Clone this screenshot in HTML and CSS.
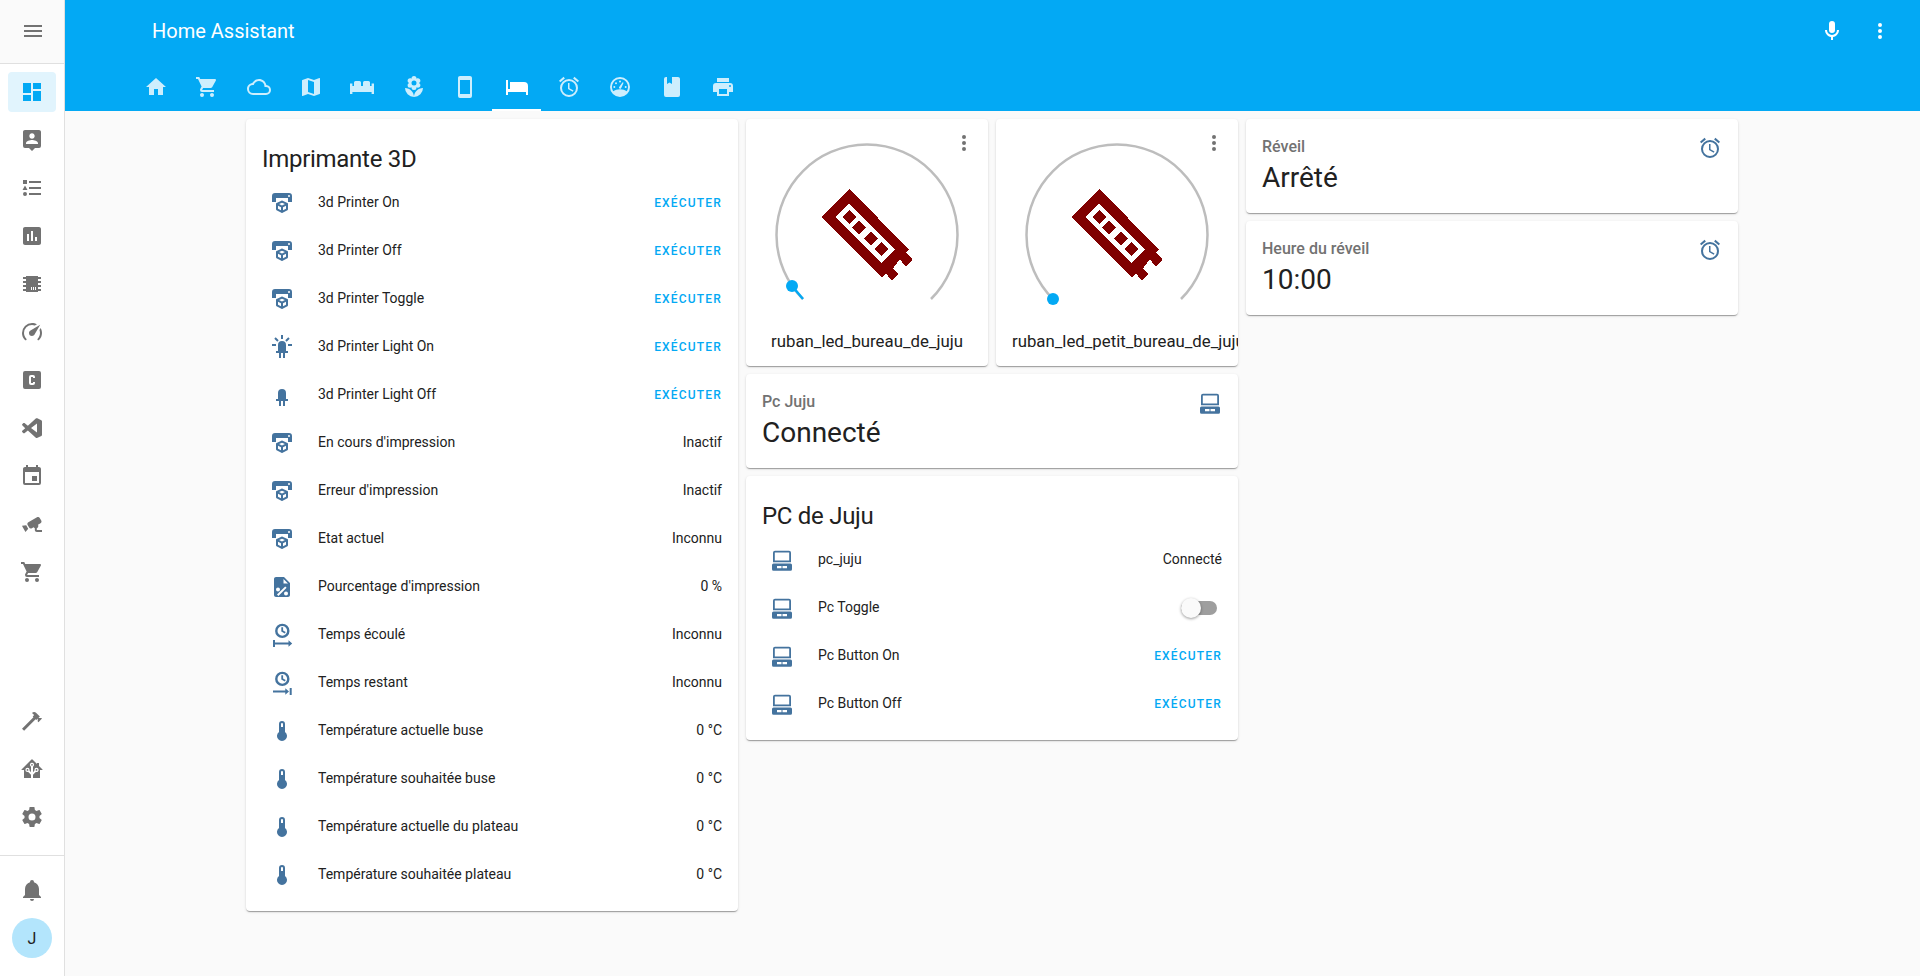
FILE: index.html
```html
<!DOCTYPE html>
<html lang="fr">
<head>
<meta charset="utf-8">
<title>Home Assistant</title>
<link rel="stylesheet" href="styles.css">
</head>
<body>
<svg class="sprite" xmlns="http://www.w3.org/2000/svg">
  <symbol id="menu" viewBox="0 0 24 24"><path d="M3,6H21V8H3V6M3,11H21V13H3V11M3,16H21V18H3V16Z"/></symbol>
  <symbol id="home" viewBox="0 0 24 24"><path d="M10,20V14H14V20H19V12H22L12,3L2,12H5V20H10Z"/></symbol>
  <symbol id="cart" viewBox="0 0 24 24"><path d="M17,18C15.89,18 15,18.89 15,20A2,2 0 0,0 17,22A2,2 0 0,0 19,20C19,18.89 18.1,18 17,18M1,2V4H3L6.6,11.59L5.24,14.04C5.09,14.32 5,14.65 5,15A2,2 0 0,0 7,17H19V15H7.42A0.25,0.25 0 0,1 7.17,14.75C7.17,14.7 7.18,14.66 7.2,14.63L8.1,13H15.55C16.3,13 16.96,12.58 17.3,11.97L20.88,5.5C20.95,5.34 21,5.17 21,5A1,1 0 0,0 20,4H5.21L4.27,2M7,18C5.89,18 5,18.89 5,20A2,2 0 0,0 7,22A2,2 0 0,0 9,20C9,18.89 8.1,18 7,18Z"/></symbol>
  <symbol id="cloud" viewBox="0 0 24 24"><path d="M19,18H6A4,4 0 0,1 2,14A4,4 0 0,1 6,10H6.71C7.37,7.69 9.5,6 12,6A5.5,5.5 0 0,1 17.5,11.5V12H19A3,3 0 0,1 22,15A3,3 0 0,1 19,18M19.35,10.03C18.67,6.59 15.64,4 12,4C9.11,4 6.6,5.64 5.35,8.03C2.34,8.36 0,10.9 0,14A6,6 0 0,0 6,20H19A5,5 0 0,0 24,15C24,12.36 21.95,10.22 19.35,10.03Z"/></symbol>
  <symbol id="map" viewBox="0 0 24 24"><path d="M15,19L9,16.89V5L15,7.11M20.5,3C20.44,3 20.39,3 20.34,3L15,5.1L9,3L3.36,4.9C3.15,4.97 3,5.15 3,5.38V20.5A0.5,0.5 0 0,0 3.5,21C3.55,21 3.61,21 3.66,20.97L9,18.9L15,21L20.64,19.1C20.85,19 21,18.85 21,18.62V3.5A0.5,0.5 0 0,0 20.5,3Z"/></symbol>
  <symbol id="sofa" viewBox="0 0 24 24"><path d="M0 8.5H2.4V11H4V7.5A1.5 1.5 0 0 1 5.5 6H9.5A1.5 1.5 0 0 1 11 7.5V11H13V7.5A1.5 1.5 0 0 1 14.5 6H18.5A1.5 1.5 0 0 1 20 7.5V11H21.6V8.5H24V19H21.6V17H2.4V19H0Z"/></symbol>
  <symbol id="flower" viewBox="0 0 24 24"><path fill-rule="evenodd" d="M3,13A9,9 0 0,0 12,22C12,17 7.97,13 3,13M12,5.5A2.5,2.5 0 0,1 14.5,8A2.5,2.5 0 0,1 12,10.5A2.5,2.5 0 0,1 9.5,8A2.5,2.5 0 0,1 12,5.5M5.6,10.25A2.5,2.5 0 0,0 8.1,12.75C8.63,12.75 9.12,12.58 9.5,12.31C9.5,12.37 9.5,12.43 9.5,12.5A2.5,2.5 0 0,0 12,15A2.5,2.5 0 0,0 14.5,12.5C14.5,12.43 14.5,12.37 14.5,12.31C14.88,12.58 15.37,12.75 15.9,12.75C17.28,12.75 18.4,11.63 18.4,10.25C18.4,9.25 17.81,8.4 16.97,8C17.81,7.6 18.4,6.74 18.4,5.75C18.4,4.37 17.28,3.25 15.9,3.25C15.37,3.25 14.88,3.41 14.5,3.69C14.5,3.63 14.5,3.56 14.5,3.5A2.5,2.5 0 0,0 12,1A2.5,2.5 0 0,0 9.5,3.5C9.5,3.56 9.5,3.63 9.5,3.69C9.12,3.41 8.63,3.25 8.1,3.25A2.5,2.5 0 0,0 5.6,5.75C5.6,6.74 6.19,7.6 7.03,8C6.19,8.4 5.6,9.25 5.6,10.25M12,22A9,9 0 0,0 21,13C16,13 12,17 12,22Z"/></symbol>
  <symbol id="phone" viewBox="0 0 24 24"><path d="M17,19H7V5H17M17,1H7C5.89,1 5,1.89 5,3V21A2,2 0 0,0 7,23H17A2,2 0 0,0 19,21V3C19,1.89 18.1,1 17,1Z"/></symbol>
  <symbol id="bed" viewBox="0 0 24 24"><path d="M19,7H5V14H3V5H1V20H3V17H21V20H23V11A4,4 0 0,0 19,7Z"/></symbol>
  <symbol id="alarm" viewBox="0 0 24 24"><path d="M12,20A7,7 0 0,1 5,13A7,7 0 0,1 12,6A7,7 0 0,1 19,13A7,7 0 0,1 12,20M12,4A9,9 0 0,0 3,13A9,9 0 0,0 12,22A9,9 0 0,0 21,13A9,9 0 0,0 12,4M12.5,8H11V14L15.75,16.85L16.5,15.62L12.5,13.25V8M7.88,3.39L6.6,1.86L2,5.71L3.29,7.24L7.88,3.39M22,5.72L17.4,1.86L16.11,3.39L20.71,7.25L22,5.72Z"/></symbol>
  <symbol id="dial" viewBox="0 0 24 24"><path fill-rule="evenodd" d="M12 2A10 10 0 1 1 12 22A10 10 0 1 1 12 2M12 4A8 8 0 0 0 5.2 16.2C6.9 14.9 9.3 14.2 12 14.2C14.7 14.2 17.1 14.9 18.8 16.2A8 8 0 0 0 12 4Z"/><path d="M11 12.2L14.6 7.2L15.6 7.8L13 13.4A1.2 1.2 0 0 1 11 12.2Z"/><circle cx="12" cy="6.6" r="1"/><circle cx="8" cy="8.3" r="1"/><circle cx="6.3" cy="12" r="1"/><circle cx="17.7" cy="12" r="1"/></symbol>
  <symbol id="book" viewBox="0 0 24 24"><path d="M18,22A2,2 0 0,0 20,20V4C20,2.89 19.1,2 18,2H12V9L9.5,7.5L7,9V2H6A2,2 0 0,0 4,4V20A2,2 0 0,0 6,22H18Z"/></symbol>
  <symbol id="printer" viewBox="0 0 24 24"><path d="M18,3H6V7H18M19,12A1,1 0 0,1 18,11A1,1 0 0,1 19,10A1,1 0 0,1 20,11A1,1 0 0,1 19,12M16,19H8V14H16M19,8H5A3,3 0 0,0 2,11V17H6V21H18V17H22V11A3,3 0 0,0 19,8Z"/></symbol>
  <symbol id="mic" viewBox="0 0 24 24"><path d="M12,2A3,3 0 0,1 15,5V11A3,3 0 0,1 12,14A3,3 0 0,1 9,11V5A3,3 0 0,1 12,2M19,11C19,14.53 16.39,17.44 13,17.93V21H11V17.93C7.61,17.44 5,14.53 5,11H7A5,5 0 0,0 12,16A5,5 0 0,0 17,11H19Z"/></symbol>
  <symbol id="dots" viewBox="0 0 24 24"><path d="M12,16A2,2 0 0,1 14,18A2,2 0 0,1 12,20A2,2 0 0,1 10,18A2,2 0 0,1 12,16M12,10A2,2 0 0,1 14,12A2,2 0 0,1 12,14A2,2 0 0,1 10,12A2,2 0 0,1 12,10M12,4A2,2 0 0,1 14,6A2,2 0 0,1 12,8A2,2 0 0,1 10,6A2,2 0 0,1 12,4Z"/></symbol>
  <symbol id="dashboard" viewBox="0 0 24 24"><path d="M13,3V9H21V3M13,21H21V11H13M3,21H11V15H3M3,13H11V3H3V13Z"/></symbol>
  <symbol id="account-pin" viewBox="0 0 24 24"><path fill-rule="evenodd" d="M18,16H6V15.1C6,13.1 10,12 12,12C14,12 18,13.1 18,15.1ZM12,5.3C13.5,5.3 14.7,6.5 14.7,8C14.7,9.5 13.5,10.7 12,10.7C10.5,10.7 9.3,9.5 9.3,8C9.3,6.5 10.5,5.3 12,5.3ZM19,2H5C3.89,2 3,2.89 3,4V18A2,2 0 0,0 5,20H9L12,23L15,20H19A2,2 0 0,0 21,18V4C21,2.89 20.1,2 19,2Z"/></symbol>
  <symbol id="list" viewBox="0 0 24 24"><path d="M5,9.5L7.5,14H2.5L5,9.5M3,4H7V8H3V4M5,20A2,2 0 0,0 7,18A2,2 0 0,0 5,16A2,2 0 0,0 3,18A2,2 0 0,0 5,20M9,5V7H21V5H9M9,19H21V17H9V19M9,13H21V11H9V13Z"/></symbol>
  <symbol id="chart" viewBox="0 0 24 24"><path fill-rule="evenodd" d="M19 3H5C3.9 3 3 3.9 3 5V19C3 20.1 3.9 21 5 21H19C20.1 21 21 20.1 21 19V5C21 3.9 20.1 3 19 3M9 17H7V10H9V17M13 17H11V7H13V17M17 17H15V13H17V17Z"/></symbol>
  <symbol id="chip" viewBox="0 0 24 24"><path fill-rule="evenodd" d="M6,4H18V5H21V7H18V9H21V11H18V13H21V15H18V17H21V19H18V20H6V19H3V17H6V15H3V13H6V11H3V9H6V7H3V5H6V4M11,15V18H12V15H11M13,15V18H14V15H13M15,15V18H16V15H15Z"/></symbol>
  <symbol id="speed" viewBox="0 0 24 24"><path d="M12,16A3,3 0 0,1 9,13C9,11.88 9.61,10.9 10.5,10.39L20.21,4.77L14.68,14.35C14.18,15.33 13.17,16 12,16M12,3C13.81,3 15.5,3.5 16.97,4.32L14.87,5.53C14,5.19 13,5 12,5A8,8 0 0,0 4,13C4,15.21 4.89,17.21 6.34,18.65H6.35C6.74,19.04 6.74,19.67 6.35,20.06C5.96,20.45 5.32,20.45 4.93,20.07V20.07C3.12,18.26 2,15.76 2,13A10,10 0 0,1 12,3M22,13C22,15.76 20.88,18.26 19.07,20.07V20.07C18.68,20.45 18.05,20.45 17.66,20.06C17.27,19.67 17.27,19.04 17.66,18.65V18.65C19.11,17.2 20,15.21 20,13C20,12 19.81,11 19.46,10.1L20.68,8C21.5,9.5 22,11.18 22,13Z"/></symbol>
  <symbol id="c-box" viewBox="0 0 24 24"><path fill-rule="evenodd" d="M11,7A2,2 0 0,0 9,9V15A2,2 0 0,0 11,17H13A2,2 0 0,0 15,15V14H13V15H11V9H13V10H15V9A2,2 0 0,0 13,7H11M5,3H19A2,2 0 0,1 21,5V19A2,2 0 0,1 19,21H5A2,2 0 0,1 3,19V5A2,2 0 0,1 5,3Z"/></symbol>
  <symbol id="vscode" viewBox="0 0 24 24"><path fill-rule="evenodd" d="M17 16.47V7.39L11 11.93M2.22 9.19C2 8.95 1.94 8.55 2.22 8.23L3.42 7.12C3.62 6.94 4.1 6.86 4.45 7.12L7.87 9.72L15.8 2.47C16.12 2.15 16.67 2.03 17.3 2.36L21.3 4.28C21.66 4.49 22 4.82 22 5.44V18.94C22 19.35 21.7 19.79 21.38 19.96L16.97 22.06C16.65 22.19 16.04 22.06 15.83 21.85L7.85 14.58L4.43 17.17C4.05 17.43 3.6 17.36 3.41 17.17L2.2 16.07C1.88 15.74 1.92 15.2 2.24 14.87L5.24 12.13Z"/></symbol>
  <symbol id="calendar" viewBox="0 0 24 24"><path fill-rule="evenodd" d="M19,19H5V8H19M16,1V3H8V1H6V3H5C3.89,3 3,3.89 3,5V19A2,2 0 0,0 5,21H19A2,2 0 0,0 21,19V5C21,3.89 20.1,3 19,3H18V1"/><path d="M17,12H12V17H17V12Z"/></symbol>
  <symbol id="cctv" viewBox="0 0 24 24"><path d="M18.15,4.94C17.77,4.91 17.37,5 17,5.2L8.35,10.2C7.39,10.76 7.07,12 7.62,12.94L9.12,15.53C9.67,16.5 10.89,16.82 11.85,16.27L13.65,15.23C13.92,15.69 14.32,16.06 14.81,16.27V18.04C14.81,19.13 15.7,20 16.81,20H22V18.04H16.81V16.27C17.72,15.87 18.31,14.97 18.31,14C18.31,13.54 18.19,13.11 17.97,12.73L20.5,11.27C21.47,10.71 21.8,9.5 21.24,8.53L19.74,5.94C19.4,5.34 18.79,5 18.15,4.94M6.22,13.17L2,13.87L2.75,15.17L4.75,18.63L5.5,19.93L8.22,16.63L6.22,13.17Z"/></symbol>
  <symbol id="hammer" viewBox="0 0 24 24"><path d="M2 19.63L13.43 8.2L12.72 7.5L14.14 6.07L12 3.89C13.2 2.7 15.09 2.7 16.27 3.89L19.87 7.5L18.45 8.91H21.29L22 9.62L18.45 13.21L17.74 12.5V9.62L16.27 11.04L15.56 10.33L4.13 21.76L2 19.63Z"/></symbol>
  <symbol id="ha" viewBox="0 0 24 24"><path fill-rule="evenodd" d="M21.8,13H20V21H13V17.67L15.79,14.88L16.5,15C17.66,15 18.6,14.06 18.6,12.9C18.6,11.74 17.66,10.8 16.5,10.8A2.1,2.1 0 0,0 14.4,12.9L14.5,13.61L13,15.13V9.65C13.66,9.29 14.1,8.6 14.1,7.8A2.1,2.1 0 0,0 12,5.7A2.1,2.1 0 0,0 9.9,7.8C9.9,8.6 10.34,9.29 11,9.65V15.13L9.5,13.61L9.6,12.9A2.1,2.1 0 0,0 7.5,10.8A2.1,2.1 0 0,0 5.4,12.9A2.1,2.1 0 0,0 7.5,15L8.21,14.88L11,17.67V21H4V13H2.25C1.83,13 1.42,13 1.42,12.79C1.43,12.57 1.85,12.15 2.28,11.72L11,3C11.33,2.67 11.67,2.33 12,2.33C12.33,2.33 12.67,2.67 13,3L17,7V6H19V9L21.78,11.78C22.18,12.18 22.59,12.59 22.6,12.8C22.6,13 22.2,13 21.8,13M7.5,12A0.9,0.9 0 0,1 8.4,12.9A0.9,0.9 0 0,1 7.5,13.8A0.9,0.9 0 0,1 6.6,12.9A0.9,0.9 0 0,1 7.5,12M16.5,12C17,12 17.4,12.4 17.4,12.9C17.4,13.4 17,13.8 16.5,13.8A0.9,0.9 0 0,1 15.6,12.9A0.9,0.9 0 0,1 16.5,12M12,6.9C12.5,6.9 12.9,7.3 12.9,7.8C12.9,8.3 12.5,8.7 12,8.7C11.5,8.7 11.1,8.3 11.1,7.8C11.1,7.3 11.5,6.9 12,6.9Z"/></symbol>
  <symbol id="cog" viewBox="0 0 24 24"><path fill-rule="evenodd" d="M12,15.5A3.5,3.5 0 0,1 8.5,12A3.5,3.5 0 0,1 12,8.5A3.5,3.5 0 0,1 15.5,12A3.5,3.5 0 0,1 12,15.5M19.43,12.97C19.47,12.65 19.5,12.33 19.5,12C19.5,11.67 19.47,11.34 19.43,11L21.54,9.37C21.73,9.22 21.78,8.95 21.66,8.73L19.66,5.27C19.54,5.05 19.27,4.96 19.05,5.05L16.56,6.05C16.04,5.66 15.5,5.32 14.87,5.07L14.5,2.42C14.46,2.18 14.25,2 14,2H10C9.75,2 9.54,2.18 9.5,2.42L9.13,5.07C8.5,5.32 7.96,5.66 7.44,6.05L4.95,5.05C4.73,4.96 4.46,5.05 4.34,5.27L2.34,8.73C2.21,8.95 2.27,9.22 2.46,9.37L4.57,11C4.53,11.34 4.5,11.67 4.5,12C4.5,12.33 4.53,12.65 4.57,12.97L2.46,14.63C2.27,14.78 2.21,15.05 2.34,15.27L4.34,18.73C4.46,18.95 4.73,19.03 4.95,18.95L7.44,17.94C7.96,18.34 8.5,18.68 9.13,18.93L9.5,21.58C9.54,21.82 9.75,22 10,22H14C14.25,22 14.46,21.82 14.5,21.58L14.87,18.93C15.5,18.67 16.04,18.34 16.56,17.94L19.05,18.95C19.27,19.03 19.54,18.95 19.66,18.73L21.66,15.27C21.78,15.05 21.73,14.78 21.54,14.63L19.43,12.97Z"/></symbol>
  <symbol id="bell" viewBox="0 0 24 24"><path d="M21,19V20H3V19L5,17V11C5,7.9 7.03,5.17 10,4.29C10,4.19 10,4.1 10,4A2,2 0 0,1 12,2A2,2 0 0,1 14,4C14,4.1 14,4.19 14,4.29C16.97,5.17 19,7.9 19,11V17L21,19M14,21A2,2 0 0,1 12,23A2,2 0 0,1 10,21"/></symbol>
  <symbol id="printer3d" viewBox="0 0 24 24"><path fill-rule="evenodd" d="M19,6A1,1 0 0,0 20,5A1,1 0 0,0 19,4A1,1 0 0,0 18,5A1,1 0 0,0 19,6M19,2A3,3 0 0,1 22,5V11H18V7H6V11H2V5A3,3 0 0,1 5,2H19M18,18.25C18,18.63 17.79,18.96 17.47,19.13L12.57,21.82C12.4,21.94 12.21,22 12,22C11.79,22 11.59,21.94 11.43,21.82L6.53,19.13C6.21,18.96 6,18.63 6,18.25V13C6,12.62 6.21,12.29 6.53,12.12L11.43,9.68C11.59,9.56 11.79,9.5 12,9.5C12.21,9.5 12.4,9.56 12.57,9.68L17.47,12.12C17.79,12.29 18,12.62 18,13V18.25M12,11.65L9.04,13L12,14.6L14.96,13L12,11.65M8,17.66L11,19.29V16.33L8,14.71V17.66M16,17.66V14.71L13,16.33V19.29L16,17.66Z"/></symbol>
  <symbol id="led-on" viewBox="0 0 24 24"><path d="M11,0V4H13V0H11M18.3,2.29L15.24,5.29L16.64,6.71L19.7,3.71L18.3,2.29M5.7,2.29L4.29,3.71L7.29,6.71L8.71,5.29L5.7,2.29M12,6A4,4 0 0,0 8,10V16H6V18H9V23H11V18H13V23H15V18H18V16H16V10A4,4 0 0,0 12,6M2,9V11H6V9H2M18,9V11H22V9H18Z"/></symbol>
  <symbol id="led-off" viewBox="0 0 24 24"><path d="M12,6A4,4 0 0,0 8,10V16H6V18H9V23H11V18H13V23H15V18H18V16H16V10A4,4 0 0,0 12,6Z"/></symbol>
  <symbol id="file-percent" viewBox="0 0 24 24"><path fill-rule="evenodd" d="M14 2H6C4.9 2 4 2.9 4 4V20C4 21.1 4.9 22 6 22H18C19.1 22 20 21.1 20 20V8ZM13.5 4V8.5H18ZM15.2 11.4L16.6 12.8L8.4 21L7 19.6ZM8 12.5A2 2 0 1 1 8 16.5A2 2 0 1 1 8 12.5ZM16 16.5A2 2 0 1 1 16 20.5A2 2 0 1 1 16 16.5Z"/></symbol>
  <symbol id="time-start" viewBox="0 0 24 24"><path fill-rule="evenodd" d="M12.3 0.7A7.2 7.2 0 1 1 12.3 15.1A7.2 7.2 0 1 1 12.3 0.7M12.3 3.1A4.8 4.8 0 1 0 12.3 12.7A4.8 4.8 0 1 0 12.3 3.1Z"/><path d="M11.3 4.2H13.1V7.5L15.7 9L14.8 10.5L11.3 8.4ZM3 17H5V24H3ZM5 19.5H18.5V17.3L22.2 20.5L18.5 23.7V21.5H5Z"/></symbol>
  <symbol id="time-end" viewBox="0 0 24 24"><path fill-rule="evenodd" d="M12.3 0.7A7.2 7.2 0 1 1 12.3 15.1A7.2 7.2 0 1 1 12.3 0.7M12.3 3.1A4.8 4.8 0 1 0 12.3 12.7A4.8 4.8 0 1 0 12.3 3.1Z"/><path d="M11.3 4.2H13.1V7.5L15.7 9L14.8 10.5L11.3 8.4ZM19.7 17H21.7V24H19.7ZM3 19.5H15.3V17.3L19 20.5L15.3 23.7V21.5H3Z"/></symbol>
  <symbol id="thermo" viewBox="0 0 24 24"><path fill-rule="evenodd" d="M15 13V5A3 3 0 0 0 9 5V13A5 5 0 1 0 15 13M12 4A1 1 0 0 1 13 5V8H11V5A1 1 0 0 1 12 4Z"/></symbol>
  <symbol id="laptop" viewBox="0 0 24 24"><path fill-rule="evenodd" d="M5 2.7H19A2 2 0 0 1 21 4.7V14.3H3V4.7A2 2 0 0 1 5 2.7ZM4.8 4.5V12.6H19.2V4.5ZM3.5 15.6H20.5A1.5 1.5 0 0 1 22 17.1V21.2A1.5 1.5 0 0 1 20.5 22.7H3.5A1.5 1.5 0 0 1 2 21.2V17.1A1.5 1.5 0 0 1 3.5 15.6ZM7 18V20.2H11.5V18ZM12.5 18V20.2H17V18Z"/></symbol>
</svg>

<div class="app">
  <aside class="sidebar">
    <div class="side-head"><svg class="ic"><use href="#menu"/></svg></div>
    <nav class="side-list">
      <a class="side-item active"><svg class="ic"><use href="#dashboard"/></svg></a>
      <a class="side-item"><svg class="ic"><use href="#account-pin"/></svg></a>
      <a class="side-item"><svg class="ic"><use href="#list"/></svg></a>
      <a class="side-item"><svg class="ic"><use href="#chart"/></svg></a>
      <a class="side-item"><svg class="ic"><use href="#chip"/></svg></a>
      <a class="side-item"><svg class="ic"><use href="#speed"/></svg></a>
      <a class="side-item"><svg class="ic"><use href="#c-box"/></svg></a>
      <a class="side-item"><svg class="ic"><use href="#vscode"/></svg></a>
      <a class="side-item"><svg class="ic"><use href="#calendar"/></svg></a>
      <a class="side-item"><svg class="ic"><use href="#cctv"/></svg></a>
      <a class="side-item"><svg class="ic"><use href="#cart"/></svg></a>
    </nav>
    <nav class="side-tools">
      <a class="side-item"><svg class="ic"><use href="#hammer"/></svg></a>
      <a class="side-item"><svg class="ic"><use href="#ha"/></svg></a>
      <a class="side-item"><svg class="ic"><use href="#cog"/></svg></a>
    </nav>
    <div class="side-foot">
      <a class="side-item"><svg class="ic"><use href="#bell"/></svg></a>
      <div class="avatar">J</div>
    </div>
  </aside>

  <div class="main">
    <header class="header">
      <div class="toolbar">
        <div class="title">Home Assistant</div>
        <svg class="ic tool-mic"><use href="#mic"/></svg>
        <svg class="ic tool-dots"><use href="#dots"/></svg>
      </div>
      <div class="tabs">
        <a class="tab"><svg class="ic"><use href="#home"/></svg></a>
        <a class="tab"><svg class="ic"><use href="#cart"/></svg></a>
        <a class="tab"><svg class="ic"><use href="#cloud"/></svg></a>
        <a class="tab"><svg class="ic"><use href="#map"/></svg></a>
        <a class="tab"><svg class="ic"><use href="#sofa"/></svg></a>
        <a class="tab"><svg class="ic"><use href="#flower"/></svg></a>
        <a class="tab"><svg class="ic"><use href="#phone"/></svg></a>
        <a class="tab active"><svg class="ic"><use href="#bed"/></svg></a>
        <a class="tab"><svg class="ic"><use href="#alarm"/></svg></a>
        <a class="tab"><svg class="ic"><use href="#dial"/></svg></a>
        <a class="tab"><svg class="ic"><use href="#book"/></svg></a>
        <a class="tab"><svg class="ic"><use href="#printer"/></svg></a>
      </div>
    </header>

    <main class="content">
      <section class="col">
        <div class="card">
          <h2 class="card-title">Imprimante 3D</h2>
          <div class="rows">
            <div class="row"><svg class="ic badge"><use href="#printer3d"/></svg><span class="name">3d Printer On</span><span class="action">EXÉCUTER</span></div>
            <div class="row"><svg class="ic badge"><use href="#printer3d"/></svg><span class="name">3d Printer Off</span><span class="action">EXÉCUTER</span></div>
            <div class="row"><svg class="ic badge"><use href="#printer3d"/></svg><span class="name">3d Printer Toggle</span><span class="action">EXÉCUTER</span></div>
            <div class="row"><svg class="ic badge"><use href="#led-on"/></svg><span class="name">3d Printer Light On</span><span class="action">EXÉCUTER</span></div>
            <div class="row"><svg class="ic badge"><use href="#led-off"/></svg><span class="name">3d Printer Light Off</span><span class="action">EXÉCUTER</span></div>
            <div class="row"><svg class="ic badge"><use href="#printer3d"/></svg><span class="name">En cours d'impression</span><span class="state">Inactif</span></div>
            <div class="row"><svg class="ic badge"><use href="#printer3d"/></svg><span class="name">Erreur d'impression</span><span class="state">Inactif</span></div>
            <div class="row"><svg class="ic badge"><use href="#printer3d"/></svg><span class="name">Etat actuel</span><span class="state">Inconnu</span></div>
            <div class="row"><svg class="ic badge"><use href="#file-percent"/></svg><span class="name">Pourcentage d'impression</span><span class="state">0 %</span></div>
            <div class="row"><svg class="ic badge"><use href="#time-start"/></svg><span class="name">Temps écoulé</span><span class="state">Inconnu</span></div>
            <div class="row"><svg class="ic badge"><use href="#time-end"/></svg><span class="name">Temps restant</span><span class="state">Inconnu</span></div>
            <div class="row"><svg class="ic badge"><use href="#thermo"/></svg><span class="name">Température actuelle buse</span><span class="state">0 °C</span></div>
            <div class="row"><svg class="ic badge"><use href="#thermo"/></svg><span class="name">Température souhaitée buse</span><span class="state">0 °C</span></div>
            <div class="row"><svg class="ic badge"><use href="#thermo"/></svg><span class="name">Température actuelle du plateau</span><span class="state">0 °C</span></div>
            <div class="row"><svg class="ic badge"><use href="#thermo"/></svg><span class="name">Température souhaitée plateau</span><span class="state">0 °C</span></div>
          </div>
        </div>
      </section>

      <section class="col">
        <div class="light-row">
          <div class="card light">
            <svg class="ic light-menu"><use href="#dots"/></svg>
            <svg class="gauge" viewBox="0 0 242 200">
              <path class="track" d="M57 180A90.5 90.5 0 1 1 185 180"/>
              <polygon class="led" points="103.3,70 75.3,98 135.7,158.3 140,154.3 145.7,161.7 152.7,154.7 146.7,149.7 154,140.3 159.7,147.7 166.7,140.7 160,133.7 163,130.3"/>
              <polygon class="led-frame" points="103,84.3 89.3,98 135.3,144 149,130.3"/>
              <polygon class="led" points="103,91 110,98 103,105 96,98"/>
              <polygon class="led" points="113.3,101.7 120.3,108.7 113.3,115.7 106.3,108.7"/>
              <polygon class="led" points="124.7,112.7 131.7,119.7 124.7,126.7 117.7,119.7"/>
              <polygon class="led" points="135,123 142,130 135,137 128,130"/>
              <path class="value" d="M57 180L46 167"/>
              <circle class="handle" cx="46" cy="167" r="6"/>
            </svg>
            <div class="light-name">ruban_led_bureau_de_juju</div>
          </div>
          <div class="card light">
            <svg class="ic light-menu"><use href="#dots"/></svg>
            <svg class="gauge" viewBox="0 0 242 200">
              <path class="track" d="M57 180A90.5 90.5 0 1 1 185 180"/>
              <polygon class="led" points="103.3,70 75.3,98 135.7,158.3 140,154.3 145.7,161.7 152.7,154.7 146.7,149.7 154,140.3 159.7,147.7 166.7,140.7 160,133.7 163,130.3"/>
              <polygon class="led-frame" points="103,84.3 89.3,98 135.3,144 149,130.3"/>
              <polygon class="led" points="103,91 110,98 103,105 96,98"/>
              <polygon class="led" points="113.3,101.7 120.3,108.7 113.3,115.7 106.3,108.7"/>
              <polygon class="led" points="124.7,112.7 131.7,119.7 124.7,126.7 117.7,119.7"/>
              <polygon class="led" points="135,123 142,130 135,137 128,130"/>
              <circle class="handle" cx="57" cy="180" r="6"/>
            </svg>
            <div class="light-name">ruban_led_petit_bureau_de_juju</div>
          </div>
        </div>
        <div class="card entity">
          <div class="entity-text"><div class="entity-label">Pc Juju</div><div class="entity-value">Connecté</div></div>
          <svg class="ic entity-icon"><use href="#laptop"/></svg>
        </div>
        <div class="card">
          <h2 class="card-title">PC de Juju</h2>
          <div class="rows">
            <div class="row"><svg class="ic badge"><use href="#laptop"/></svg><span class="name">pc_juju</span><span class="state">Connecté</span></div>
            <div class="row"><svg class="ic badge"><use href="#laptop"/></svg><span class="name">Pc Toggle</span><span class="switch"><span class="thumb"></span></span></div>
            <div class="row"><svg class="ic badge"><use href="#laptop"/></svg><span class="name">Pc Button On</span><span class="action">EXÉCUTER</span></div>
            <div class="row"><svg class="ic badge"><use href="#laptop"/></svg><span class="name">Pc Button Off</span><span class="action">EXÉCUTER</span></div>
          </div>
        </div>
      </section>

      <section class="col">
        <div class="card entity">
          <div class="entity-text"><div class="entity-label">Réveil</div><div class="entity-value">Arrêté</div></div>
          <svg class="ic entity-icon"><use href="#alarm"/></svg>
        </div>
        <div class="card entity">
          <div class="entity-text"><div class="entity-label">Heure du réveil</div><div class="entity-value">10:00</div></div>
          <svg class="ic entity-icon"><use href="#alarm"/></svg>
        </div>
      </section>
    </main>
  </div>
</div>
</body>
</html>
```

FILE: styles.css
```css
* { box-sizing: border-box; }
html, body { margin: 0; height: 100%; }
body {
  background: #fafafa;
  color: #212121;
  font-family: Roboto, "Liberation Sans", sans-serif;
  font-size: 14px;
  overflow: hidden;
}
.sprite { display: none; }
.ic { display: block; width: 24px; height: 24px; fill: currentColor; flex: none; }

.app { display: flex; height: 976px; }

/* Sidebar */
.sidebar {
  width: 65px;
  flex: none;
  display: flex;
  flex-direction: column;
  background: #fff;
  border-right: 1px solid #e0e0e0;
  color: #727272;
}
.side-head {
  height: 64px;
  background: #fafafa;
  border-bottom: 1px solid #e0e0e0;
  display: flex;
  align-items: center;
  padding: 0 0 2px 21px;
  flex: none;
}
.side-list { padding-top: 8px; display: flex; flex-direction: column; gap: 8px; }
.side-tools { margin-top: auto; padding-bottom: 18px; display: flex; flex-direction: column; gap: 8px; }
.side-item {
  display: flex;
  align-items: center;
  justify-content: center;
  width: 48px;
  height: 40px;
  margin-left: 8px;
  border-radius: 4px;
  flex: none;
}
.side-item.active { background: #e1f4fd; color: #03a9f4; }
.side-foot { border-top: 1px solid #e0e0e0; padding: 14px 0 18px; display: flex; flex-direction: column; gap: 8px; }
.avatar {
  width: 40px;
  height: 40px;
  margin-left: 12px;
  border-radius: 50%;
  background: #b3e5fc;
  color: #212121;
  font-size: 16px;
  display: flex;
  align-items: center;
  justify-content: center;
}

/* Header */
.main { flex: 1; min-width: 0; display: flex; flex-direction: column; }
.header { background: #03a9f4; color: #fff; height: 111px; flex: none; }
.toolbar { height: 62px; display: flex; align-items: center; padding: 0 28px 0 87px; }
.title { font-size: 20px; flex: 1; }
.tool-mic { margin-right: 24px; }
.tabs { display: flex; padding-left: 65px; height: 49px; }
.tab {
  position: relative;
  width: 51.6px;
  display: flex;
  align-items: flex-start;
  justify-content: center;
  padding-top: 13px;
  color: #cdeefd;
}
.tab.active { color: #fff; }
.tab.active::after {
  content: "";
  position: absolute;
  left: 1px;
  right: 1.6px;
  bottom: 0;
  height: 2px;
  background: #fff;
}

/* Content */
.content { display: flex; justify-content: center; gap: 8px; padding: 8px 1px 0 0; }
.col { width: 492px; display: flex; flex-direction: column; gap: 8px; }
.card {
  background: #fff;
  border-radius: 4px;
  box-shadow: 0 2px 1px -1px rgba(0,0,0,.2), 0 1px 1px 0 rgba(0,0,0,.14), 0 1px 3px 0 rgba(0,0,0,.12);
}
.card-title {
  margin: 0;
  padding: 24px 16px 0;
  font-size: 24px;
  line-height: 32px;
  font-weight: 400;
  letter-spacing: -0.012em;
}
.rows { padding: 7px 16px 17px; display: flex; flex-direction: column; gap: 8px; }
.row { height: 40px; display: flex; align-items: center; padding-left: 8px; }
.badge { color: #44739e; margin-top: 2px; }
.name { margin-left: 24px; flex: 1; }
.action {
  color: #03a9f4;
  font-size: 12px;
  font-weight: 500;
  letter-spacing: 1.17px;
  padding-top: 2px;
}
.switch {
  position: relative;
  width: 36px;
  height: 14px;
  margin: 2px 5px 0 0;
  border-radius: 7px;
  background: #9e9e9e;
}
.thumb {
  position: absolute;
  left: 0;
  top: -3px;
  width: 20px;
  height: 20px;
  border-radius: 50%;
  background: #fafafa;
  box-shadow: 0 1px 3px rgba(0,0,0,.4);
}

/* Light cards */
.light-row { display: flex; gap: 8px; }
.light {
  position: relative;
  width: 242px;
  height: 247px;
  overflow: hidden;
}
.light-menu { position: absolute; top: 12px; right: 12px; color: #727272; }
.gauge { display: block; width: 242px; height: 200px; }
.track { fill: none; stroke: #bdbdbd; stroke-width: 2.5; }
.value { fill: none; stroke: #03a9f4; stroke-width: 2.5; }
.handle { fill: #03a9f4; }
.led { fill: #800000; shape-rendering: crispEdges; }
.led-frame { fill: #fff; shape-rendering: crispEdges; }
.light-name {
  margin-top: 10px;
  padding: 0 16px;
  font-size: 16.8px;
  line-height: 24px;
  text-align: center;
  white-space: nowrap;
}

/* Entity cards */
.entity {
  height: 94px;
  display: flex;
  justify-content: space-between;
  padding: 16px 16px 0;
}
.entity-label { font-size: 16px; line-height: 24px; font-weight: 500; color: #727272; }
.entity-value { font-size: 28px; line-height: 37px; }
.entity-icon { color: #44739e; margin-top: 1px; }
```
